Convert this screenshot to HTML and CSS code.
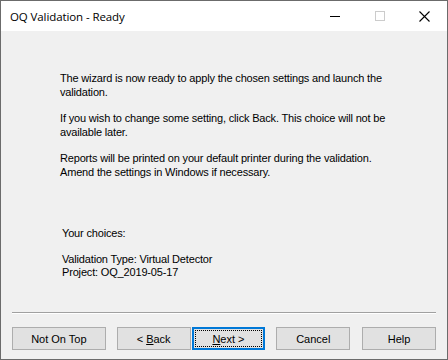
FILE: index.html
```html
<!doctype html>
<html lang="en">

<head>
  <meta charset="UTF-8" />
  <title>OQ Validation - Ready</title>
  <link rel="stylesheet" href="styles.css">
</head>

<body>
  <div class="window">
    <div class="titlebar">
      <span class="title">OQ Validation - Ready</span>
      <div class="controls">
        <span class="ctl">
          <svg width="10" height="10" viewBox="0 0 10 10"><path d="M0 5.5h10" stroke="#000" stroke-width="1" /></svg>
        </span>
        <span class="ctl">
          <svg width="10" height="10" viewBox="0 0 10 10"><rect x="0.5" y="0.5" width="9" height="9" fill="none" stroke="#cccccc" /></svg>
        </span>
        <span class="ctl">
          <svg width="11" height="11" viewBox="0 0 11 11"><path d="M0.5 0.5l10 10M10.5 0.5l-10 10" stroke="#000" stroke-width="1.1" /></svg>
        </span>
      </div>
    </div>

    <div class="content">
      <div class="info">
        <p>The wizard is now ready to apply the chosen settings and launch the<br>validation.</p>
        <p>If you wish to change some setting, click Back. This choice will not be<br>available later.</p>
        <p>Reports will be printed on your default printer during the validation.<br>Amend the settings in Windows if necessary.</p>
      </div>

      <div class="choices">
        <p>Your choices:</p>
        <p>Validation Type: Virtual Detector<br>Project: OQ_2019-05-17</p>
      </div>

      <div class="footer">
        <div class="separator"></div>
        <div class="buttons">
          <button class="btn btn-wide">Not On Top</button>
          <button class="btn btn-back"><span>&lt; <u>B</u>ack</span></button>
          <button class="btn btn-default"><span class="focus"><u>N</u>ext &gt;</span></button>
          <button class="btn btn-cancel">Cancel</button>
          <button class="btn btn-help">Help</button>
        </div>
      </div>
    </div>
  </div>
</body>

</html>
```

FILE: styles.css
```css
* {
  margin: 0;
  padding: 0;
  box-sizing: border-box;
}

body {
  font-family: 'Liberation Sans', Arial, sans-serif;
  font-size: 11px;
  color: #000;
  background: #f0f0f0;
}

.window {
  width: 448px;
  height: 360px;
  border: 1px solid #6b6b6b;
  display: flex;
  flex-direction: column;
  background: #f0f0f0;
}

.titlebar {
  height: 30px;
  background: #fff;
  display: flex;
  align-items: center;
  justify-content: space-between;
  padding-left: 9px;
}

.title {
  font-family: 'Open Sans', 'Noto Sans', sans-serif;
  font-size: 11.5px;
  letter-spacing: -0.1px;
  color: #000;
}

.controls {
  display: flex;
  height: 100%;
}

.ctl {
  width: 45px;
  height: 100%;
  display: flex;
  align-items: center;
  justify-content: center;
}

.content {
  flex: 1;
  display: flex;
  flex-direction: column;
  padding-top: 40px;
  letter-spacing: -0.17px;
}

.info {
  padding-left: 59px;
  line-height: 14px;
}

.info p + p {
  margin-top: 12px;
}

.choices {
  margin-top: 48px;
  padding-left: 61px;
  line-height: 13px;
}

.choices p + p {
  margin-top: 13px;
}

.footer {
  margin-top: auto;
  padding: 0 11px 9px 11px;
}

.separator {
  height: 2px;
  border-top: 1px solid #a0a0a0;
  border-bottom: 1px solid #ffffff;
  margin-bottom: 13px;
}

.buttons {
  display: flex;
}

.btn {
  height: 23px;
  width: 74px;
  background: #e1e1e1;
  border: 1px solid #adadad;
  font-family: 'Liberation Sans', Arial, sans-serif;
  font-size: 11px;
  color: #000;
  display: flex;
  align-items: center;
  justify-content: center;
}

.btn-wide {
  width: 94px;
}

.btn-back {
  margin-left: 11px;
}

.btn-default {
  margin-left: 1px;
  border: 2px solid #0078d7;
  padding: 1px;
}

.focus {
  width: 100%;
  height: 100%;
  border: 1px dotted #000;
  display: flex;
  align-items: center;
  justify-content: center;
}

.btn-cancel {
  margin-left: 11px;
}

.btn-help {
  margin-left: 12px;
}
```
